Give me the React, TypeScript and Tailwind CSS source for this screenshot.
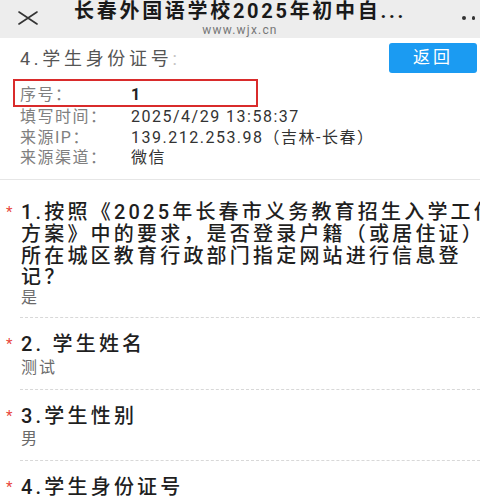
const INFO = [
  { label: '填写时间：', value: '2025/4/29 13:58:37' },
  { label: '来源IP：', value: '139.212.253.98（吉林-长春）' },
  { label: '来源渠道：', value: '微信' },
]

const QUESTIONS = [
  {
    lines: [
      '1.按照《2025年长春市义务教育招生入学工作',
      '方案》中的要求，是否登录户籍（或居住证）',
      '所在城区教育行政部门指定网站进行信息登',
      '记？',
    ],
    answer: '是',
  },
  { lines: ['2. 学生姓名'], answer: '测试' },
  { lines: ['3.学生性别'], answer: '男' },
  { lines: ['4.学生身份证号'], answer: '' },
]

function Question({ q, first }: { q: (typeof QUESTIONS)[number]; first: boolean }) {
  return (
    <section className={first ? 'pt-[22px]' : 'pt-[16px]'}>
      <div className="flex">
        <span className="w-[21px] shrink-0 pl-[6px] text-[15px] leading-[21.7px] text-[#e8453c]">*</span>
        <div className="text-[20px] font-medium leading-[21.7px] tracking-[3.2px] text-[#1f1f1f]">
          {q.lines.map((l) => (
            <div key={l} className="whitespace-nowrap">
              {l}
            </div>
          ))}
        </div>
      </div>
      {q.answer && (
        <>
          <div
            className={`pl-[21px] text-[16px] leading-[18px] tracking-[2px] text-[#6b6b6b] ${
              first ? '' : 'mt-[3px]'
            }`}
          >
            {q.answer}
          </div>
          <div
            className={`ml-[20px] border-t border-dashed border-[#d8d8d8] ${first ? 'mt-[10px]' : 'mt-[12px]'}`}
          />
        </>
      )}
    </section>
  )
}

export default function App() {
  return (
    <div className="h-[503px] w-[480px] overflow-hidden bg-white font-['Roboto','Noto_Sans_CJK_SC',sans-serif] text-[#222]">
      <header className="grid h-[38px] grid-cols-[60px_1fr_60px] bg-[#ededed]">
        <div className="flex items-start pl-[18px] pt-[11px]">
          <svg width="20" height="14" viewBox="0 0 20 14">
            <path d="M1 1 L19 13 M19 1 L1 13" stroke="#333" strokeWidth="1.6" strokeLinecap="round" />
          </svg>
        </div>
        <div className="flex flex-col items-center">
          <div className="whitespace-nowrap text-[20px] font-bold leading-[23px] tracking-[2.7px] text-[#1a1a1a]">
            长春外国语学校2025年初中自...
          </div>
          <div className="text-[12px] leading-[14px] tracking-[1.2px] text-[#777]">www.wjx.cn</div>
        </div>
        <div className="flex justify-end gap-[6px] pr-[5px] pt-[16px]">
          <span className="h-[3.5px] w-[3.5px] rounded-full bg-[#333]" />
          <span className="h-[3.5px] w-[3.5px] rounded-full bg-[#333]" />
        </div>
      </header>

      <div className="flex h-[40px] items-center justify-between pl-[20px] pr-[3px]">
        <span className="whitespace-nowrap text-[18px] tracking-[3.7px] text-[#555]">
          4.学生身份证号<span className="text-[#c4c4c4]">:</span>
        </span>
        <button className="h-[30px] w-[88px] rounded-[3px] bg-[#1b9bf2] text-[17px] tracking-[3px] text-white">
          返回
        </button>
      </div>

      <div className="pt-[1px] text-[16px] tracking-[1.5px]">
        <div className="ml-[13px] flex w-[245px] border-2 border-[#d92b2b] pl-[5px] pt-[4px] leading-[20px]">
          <span className="w-[111px] shrink-0 text-[#808080]">序号：</span>
          <span className="font-bold text-[#222]">1</span>
        </div>
        {INFO.map((r) => (
          <div key={r.label} className="flex whitespace-nowrap pl-[20px] leading-[20.7px]">
            <span className="w-[111px] shrink-0 text-[#808080]">{r.label}</span>
            <span className="text-[#333]">{r.value}</span>
          </div>
        ))}
      </div>
      <div className="mt-[10px] border-t border-[#e6e6e6]" />

      {QUESTIONS.map((q, i) => (
        <Question key={i} q={q} first={i === 0} />
      ))}
    </div>
  )
}
